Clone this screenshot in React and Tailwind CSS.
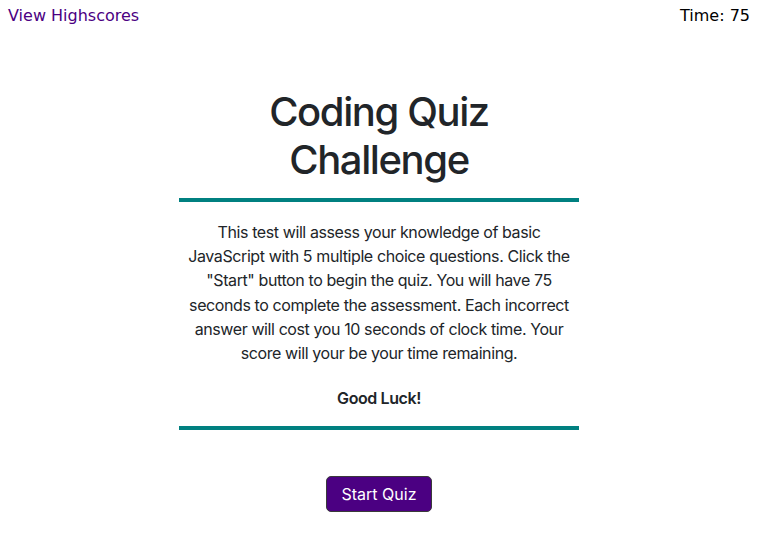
import React from "react";

export default function App() {
  return (
    <div className="min-h-screen bg-white text-[#212529]">
      <header className="flex justify-between px-[8px] pt-[6px] font-[family-name:'DejaVu_Sans',Verdana,sans-serif] text-[16px] leading-[20px]">
        <a href="#" className="text-[#4b0082]">
          View Highscores
        </a>
        <span className="text-black">Time: 75</span>
      </header>

      <main className="mx-auto w-[400px] pt-[62px] text-center font-[family-name:'Inter',sans-serif]">
        <h1 className="text-[40px] font-medium leading-[48px] tracking-[-0.035em]">
          Coding Quiz Challenge
        </h1>
        <div className="mt-[14px] h-[4px] bg-[#008080]" />
        <div className="px-[4px] pt-[18px] text-[16px] leading-[24.2px] tracking-[-0.025em]">
          <p>
            This test will assess your knowledge of basic JavaScript with 5
            multiple choice questions. Click the "Start" button to begin the
            quiz. You will have 75 seconds to complete the assessment. Each
            incorrect answer will cost you 10 seconds of clock time. Your score
            will your be your time remaining.
          </p>
          <p className="mt-[21px] font-semibold">Good Luck!</p>
        </div>
        <div className="mt-[16px] h-[4px] bg-[#008080]" />
        <button className="mt-[46px] h-[36px] rounded-[5px] border border-[#3a3a3a] bg-[#4b0082] px-[15px] text-[16px] text-white">
          Start Quiz
        </button>
      </main>
    </div>
  );
}
